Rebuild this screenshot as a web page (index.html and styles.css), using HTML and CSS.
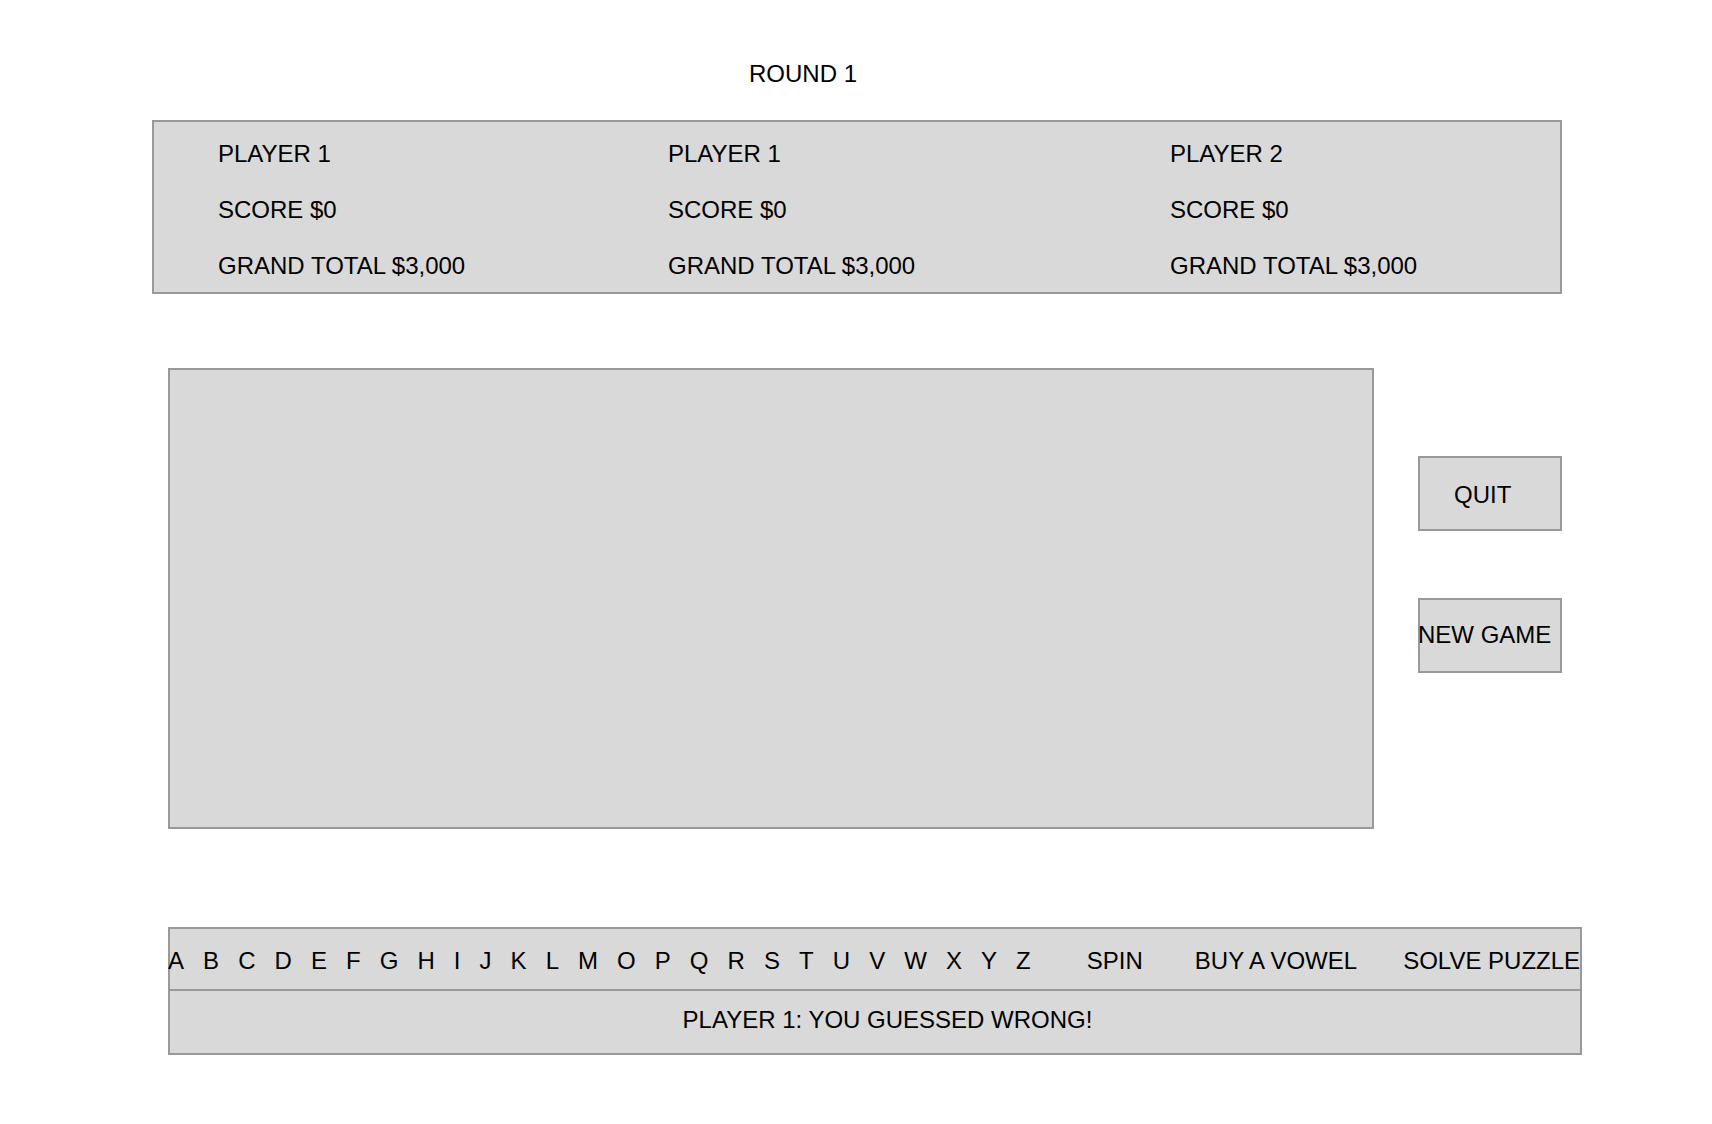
FILE: index.html
```html
<!DOCTYPE html>
<html lang="en">
<head>
<meta charset="utf-8">
<title>Wheel of Fortune</title>
<link rel="stylesheet" href="styles.css">
</head>
<body>
<div class="round">ROUND 1</div>

<section class="players">
  <div class="player">
    <div class="line">PLAYER 1</div>
    <div class="line">SCORE $0</div>
    <div class="line">GRAND TOTAL $3,000</div>
  </div>
  <div class="player">
    <div class="line">PLAYER 1</div>
    <div class="line">SCORE $0</div>
    <div class="line">GRAND TOTAL $3,000</div>
  </div>
  <div class="player">
    <div class="line">PLAYER 2</div>
    <div class="line">SCORE $0</div>
    <div class="line">GRAND TOTAL $3,000</div>
  </div>
</section>

<section class="main">
  <div class="board"></div>
  <div class="side">
    <div class="btn quit">QUIT</div>
    <div class="btn newgame">NEW GAME</div>
  </div>
</section>

<section class="controls">
  <div class="letters">
    <span>A</span><span>B</span><span>C</span><span>D</span><span>E</span><span>F</span><span>G</span><span>H</span><span>I</span><span>J</span><span>K</span><span>L</span><span>M</span><span>O</span><span>P</span><span>Q</span><span>R</span><span>S</span><span>T</span><span>U</span><span>V</span><span>W</span><span>X</span><span>Y</span><span>Z</span>
    <span class="action spin">SPIN</span>
    <span class="action vowel">BUY A VOWEL</span>
    <span class="action solve">SOLVE PUZZLE</span>
  </div>
  <div class="message">PLAYER 1: YOU GUESSED WRONG!</div>
</section>
</body>
</html>
```

FILE: styles.css
```css
* { box-sizing: border-box; }

body {
  margin: 0;
  background: #ffffff;
  color: #000000;
  font-family: "Liberation Sans", Arial, sans-serif;
  font-size: 24px;
}

.round {
  padding: 60px 0 0 749px;
  line-height: 28px;
  height: 87px;
}

.players {
  margin: 33px 0 0 152px;
  width: 1410px;
  height: 174px;
  background: #d9d9d9;
  border: 2px solid #999999;
  padding: 4px 0 0 64px;
  display: grid;
  grid-template-columns: 450px 502px 1fr;
}

.player {
  display: flex;
  flex-direction: column;
}

.line {
  height: 56px;
  line-height: 56px;
  white-space: nowrap;
}

.main {
  margin-top: 74px;
  display: flex;
  align-items: flex-start;
}

.board {
  margin-left: 168px;
  width: 1206px;
  height: 461px;
  background: #d9d9d9;
  border: 2px solid #999999;
}

.side {
  margin-left: 44px;
  display: flex;
  flex-direction: column;
}

.btn {
  width: 144px;
  height: 75px;
  background: #d9d9d9;
  border: 2px solid #999999;
  display: flex;
  align-items: center;
  white-space: nowrap;
}

.quit {
  margin-top: 88px;
  padding-left: 34px;
  padding-top: 2px;
}

.newgame {
  margin-top: 67px;
  text-indent: -2px;
  padding-bottom: 2px;
}

.controls {
  margin: 98px 0 0 168px;
  width: 1414px;
  background: #d9d9d9;
  border: 2px solid #999999;
}

.letters {
  margin: 0 -2px;
  padding: 4px 0 0 0;
  height: 62px;
  border-bottom: 2px solid #999999;
  display: flex;
  align-items: center;
  gap: 19.05px;
  white-space: nowrap;
}

.spin { margin-left: 37px; }
.vowel { margin-left: 33px; }
.solve { margin-left: 27px; }

.message {
  height: 62px;
  line-height: 58px;
  text-align: center;
  padding-left: 25px;
}
```
